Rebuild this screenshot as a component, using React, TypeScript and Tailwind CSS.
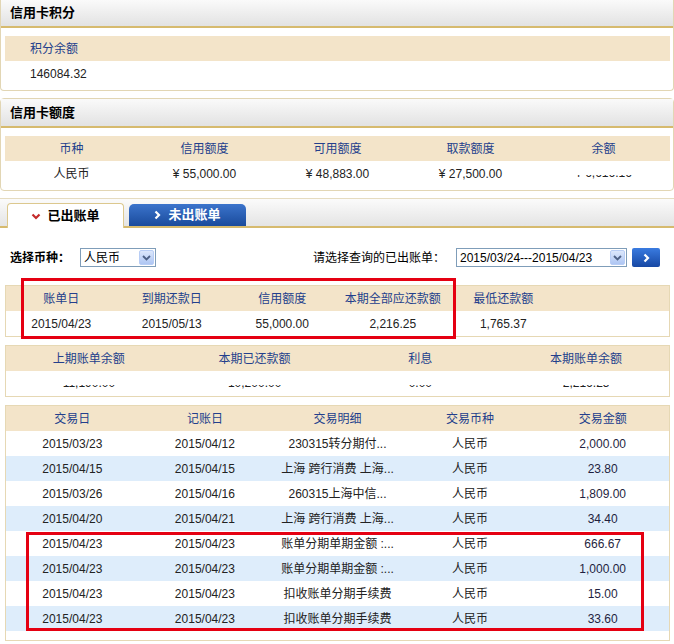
import React from "react";

const font = "font-['Liberation_Sans','Noto_Sans_CJK_SC',sans-serif]";

function SectionHeader({ title, h }: { title: string; h: string }) {
  return (
    <div
      className={`${h} flex items-center px-[9px] bg-gradient-to-b from-[#fafafa] to-[#e2e2e2] border-b-[2px] border-[#d6ba6e] text-[13px] font-bold text-black`}
    >
      {title}
    </div>
  );
}

function Clipped({ text, top }: { text: string; top: number }) {
  // value row where only the lower part of the glyphs shows
  return (
    <div className="h-[25px] flex justify-center">
      <div className="h-[4px] overflow-hidden" style={{ marginTop: top }}>
        <div className="leading-[25px]" style={{ marginTop: -top }}>
          {text}
        </div>
      </div>
    </div>
  );
}

function SelectBox({ value, w }: { value: string; w: string }) {
  return (
    <div
      className={`${w} h-[19px] border border-[#7f9db9] bg-white flex items-center justify-between pl-[3px] pr-[1px]`}
    >
      <span className="text-[12px] text-black">{value}</span>
      <span className="w-[15px] h-[15px] rounded-[2px] bg-gradient-to-b from-[#dce7fb] to-[#aec6f3] border border-[#b8cdf5] flex items-center justify-center">
        <svg width="9" height="6" viewBox="0 0 9 6">
          <path d="M1 1 L4.5 4.5 L8 1" stroke="#4d6185" strokeWidth="1.8" fill="none" />
        </svg>
      </span>
    </div>
  );
}

const txns = [
  ["2015/03/23", "2015/04/12", "230315转分期付...", "2,000.00"],
  ["2015/04/15", "2015/04/15", "上海 跨行消费 上海...", "23.80"],
  ["2015/03/26", "2015/04/16", "260315上海中信...", "1,809.00"],
  ["2015/04/20", "2015/04/21", "上海 跨行消费 上海...", "34.40"],
  ["2015/04/23", "2015/04/23", "账单分期单期金额 :...", "666.67"],
  ["2015/04/23", "2015/04/23", "账单分期单期金额 :...", "1,000.00"],
  ["2015/04/23", "2015/04/23", "扣收账单分期手续费", "15.00"],
  ["2015/04/23", "2015/04/23", "扣收账单分期手续费", "33.60"],
];

export default function App() {
  return (
    <div className={`relative w-[674px] h-[644px] overflow-hidden bg-white text-[12px] text-[#222] ${font}`}>
      {/* 信用卡积分 */}
      <div className="border-x border-b border-[#e2d6b4] rounded-b-[4px]">
        <SectionHeader title="信用卡积分" h="h-[28px]" />
        <div className="pt-[8px] pb-[4px] pl-[4px] pr-[3px]">
          <div className="h-[25px] bg-[#f3e4c9] flex items-center pl-[25px] text-[#233f8c]">积分余额</div>
          <div className="h-[25px] flex items-center pl-[25px]">146084.32</div>
        </div>
      </div>

      {/* 信用卡额度 */}
      <div className="mt-[7px] border border-[#e2d6b4] rounded-[4px]">
        <SectionHeader title="信用卡额度" h="h-[29px]" />
        <div className="pt-[8px] pb-[4px] pl-[4px] pr-[3px]">
          <div className="h-[25px] bg-[#f3e4c9] grid grid-cols-5 items-center text-center text-[#233f8c]">
            <div>币种</div>
            <div>信用额度</div>
            <div>可用额度</div>
            <div>取款额度</div>
            <div>余额</div>
          </div>
          <div className="h-[25px] grid grid-cols-5 items-center text-center">
            <div>人民币</div>
            <div>¥ 55,000.00</div>
            <div>¥ 48,883.00</div>
            <div>¥ 27,500.00</div>
            <Clipped text="¥ 6,616.16" top={14} />
          </div>
        </div>
      </div>

      {/* tabs */}
      <div className="mt-[7px] border-t border-[#e6dcc0] h-[30px] bg-gradient-to-b from-[#fbfbfb] to-[#e4e4e4] border-b-[2px] border-b-[#d6ba6e] flex items-end pl-[7px] gap-[5px]">
        <div className="-mb-[2px] w-[117px] h-[25px] bg-white border border-b-0 border-[#dcc88e] rounded-t-[4px] flex items-center justify-center gap-[6px] text-[13px] font-bold text-black">
          <svg width="10" height="7" viewBox="0 0 10 7">
            <path d="M1.5 1.5 L5 5 L8.5 1.5" stroke="#c42a2a" strokeWidth="2.2" fill="none" />
          </svg>
          已出账单
        </div>
        <div className="w-[117px] h-[22px] rounded-t-[5px] bg-gradient-to-b from-[#3b74cc] to-[#1a4b9c] flex items-center justify-center gap-[7px] text-[13px] font-bold text-white">
          <svg width="7" height="10" viewBox="0 0 7 10">
            <path d="M1.5 1.5 L5 5 L1.5 8.5" stroke="#ffffff" strokeWidth="2.2" fill="none" />
          </svg>
          未出账单
        </div>
      </div>

      {/* filters */}
      <div className="mt-[20px] h-[19px] flex items-center pl-[10px] pr-[14px]">
        <span className="font-bold text-black w-[70px]">选择币种：</span>
        <SelectBox value="人民币" w="w-[76px]" />
        <span className="ml-auto text-black mr-[11px]">请选择查询的已出账单：</span>
        <SelectBox value="2015/03/24---2015/04/23" w="w-[171px]" />
        <div className="ml-[5px] w-[28px] h-[19px] rounded-[2px] bg-gradient-to-b from-[#3a7be0] to-[#1748a4] flex items-center justify-center">
          <svg width="7" height="10" viewBox="0 0 7 10">
            <path d="M1.5 1.5 L5 5 L1.5 8.5" stroke="#ffffff" strokeWidth="2.2" fill="none" />
          </svg>
        </div>
      </div>

      {/* 账单 summary */}
      <div className="mt-[18px] mx-[5px] w-[665px] border border-[#e6d8b4]">
        <div className="h-[25px] bg-[#f3e4c9] grid grid-cols-6 items-center text-center text-[#233f8c]">
          <div>账单日</div>
          <div>到期还款日</div>
          <div>信用额度</div>
          <div>本期全部应还款额</div>
          <div>最低还款额</div>
          <div></div>
        </div>
        <div className="h-[25px] grid grid-cols-6 items-center text-center">
          <div>2015/04/23</div>
          <div>2015/05/13</div>
          <div>55,000.00</div>
          <div>2,216.25</div>
          <div>1,765.37</div>
          <div></div>
        </div>
      </div>

      <div className="mt-[8px] mx-[5px] w-[665px] border border-[#e6d8b4]">
        <div className="h-[25px] bg-[#f3e4c9] grid grid-cols-4 items-center text-center text-[#233f8c]">
          <div>上期账单余额</div>
          <div>本期已还款额</div>
          <div>利息</div>
          <div>本期账单余额</div>
        </div>
        <div className="h-[25px] grid grid-cols-4 items-center text-center">
          <Clipped text="11,190.00" top={14} />
          <Clipped text="10,200.00" top={14} />
          <Clipped text="0.00" top={14} />
          <Clipped text="2,216.25" top={14} />
        </div>
      </div>

      {/* 交易明细 */}
      <div className="mt-[8px] mx-[5px] w-[665px] border border-[#e6d8b4] pb-[9px]">
        <div className="h-[25px] bg-[#f3e4c9] grid grid-cols-5 items-center text-center text-[#233f8c]">
          <div>交易日</div>
          <div>记账日</div>
          <div>交易明细</div>
          <div>交易币种</div>
          <div>交易金额</div>
        </div>
        {txns.map((t, i) => (
          <div
            key={i}
            className={`h-[25px] grid grid-cols-5 items-center text-center ${i % 2 === 1 ? "bg-[#deedfb]" : "bg-white"}`}
          >
            <div>{t[0]}</div>
            <div>{t[1]}</div>
            <div className="whitespace-nowrap">{t[2]}</div>
            <div>人民币</div>
            <div className="text-[#1f1f3f]">{t[3]}</div>
          </div>
        ))}
      </div>

      {/* red highlight marks */}
      <div className="absolute left-[21px] top-[278px] w-[435px] h-[61px] border-[3px] border-[#e50012]" />
      <div className="absolute left-[26px] top-[532px] w-[618px] h-[99px] border-[3px] border-[#e50012]" />
    </div>
  );
}
